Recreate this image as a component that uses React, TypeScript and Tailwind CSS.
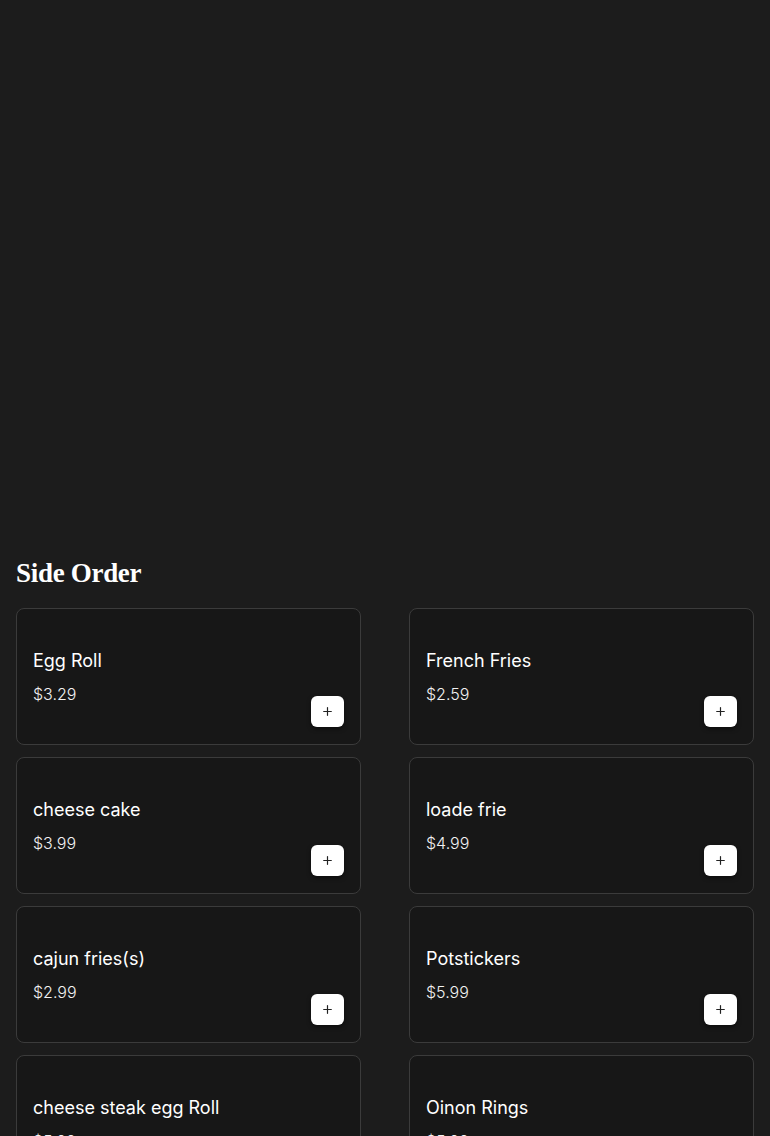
import React from "react";
import { Plus } from "lucide-react";

const items = [
  { name: "Egg Roll", price: "$3.29" },
  { name: "French Fries", price: "$2.59" },
  { name: "cheese cake", price: "$3.99" },
  { name: "loade frie", price: "$4.99" },
  { name: "cajun fries(s)", price: "$2.99" },
  { name: "Potstickers", price: "$5.99" },
  { name: "cheese steak egg Roll", price: "$5.99" },
  { name: "Oinon Rings", price: "$5.99" },
];

export default function App() {
  return (
    <div className="min-h-[1136px] bg-[#1c1c1c] text-white" style={{ fontFamily: "Inter, 'Noto Sans', sans-serif" }}>
      <div className="px-4 pt-[557px] pb-10">
        <h2
          className="text-[27px] leading-[32px] font-bold tracking-[-0.3px] mb-[19px]"
          style={{ fontFamily: "'Liberation Serif', 'DejaVu Serif', serif" }}
        >
          Side Order
        </h2>
        <div className="grid grid-cols-2 gap-x-12 gap-y-3">
          {items.map((it) => (
            <div
              key={it.name}
              className="flex justify-between rounded-lg border border-[#3b3b3b] bg-[#171717] px-4 pt-[38px] pb-[17px]"
            >
              <div className="flex flex-col pb-[21px]">
                <div className="text-[18px] leading-[28px] font-normal text-white">{it.name}</div>
                <div className="mt-[7px] text-[16px] leading-[24px] font-light text-[#f2f2f2]">{it.price}</div>
              </div>
              <button className="self-end flex h-[31px] w-[33px] items-center justify-center rounded-md bg-white shadow-[0_2px_4px_rgba(0,0,0,0.5)]">
                <Plus size={13} strokeWidth={2.2} color="#222222" />
              </button>
            </div>
          ))}
        </div>
      </div>
    </div>
  );
}
